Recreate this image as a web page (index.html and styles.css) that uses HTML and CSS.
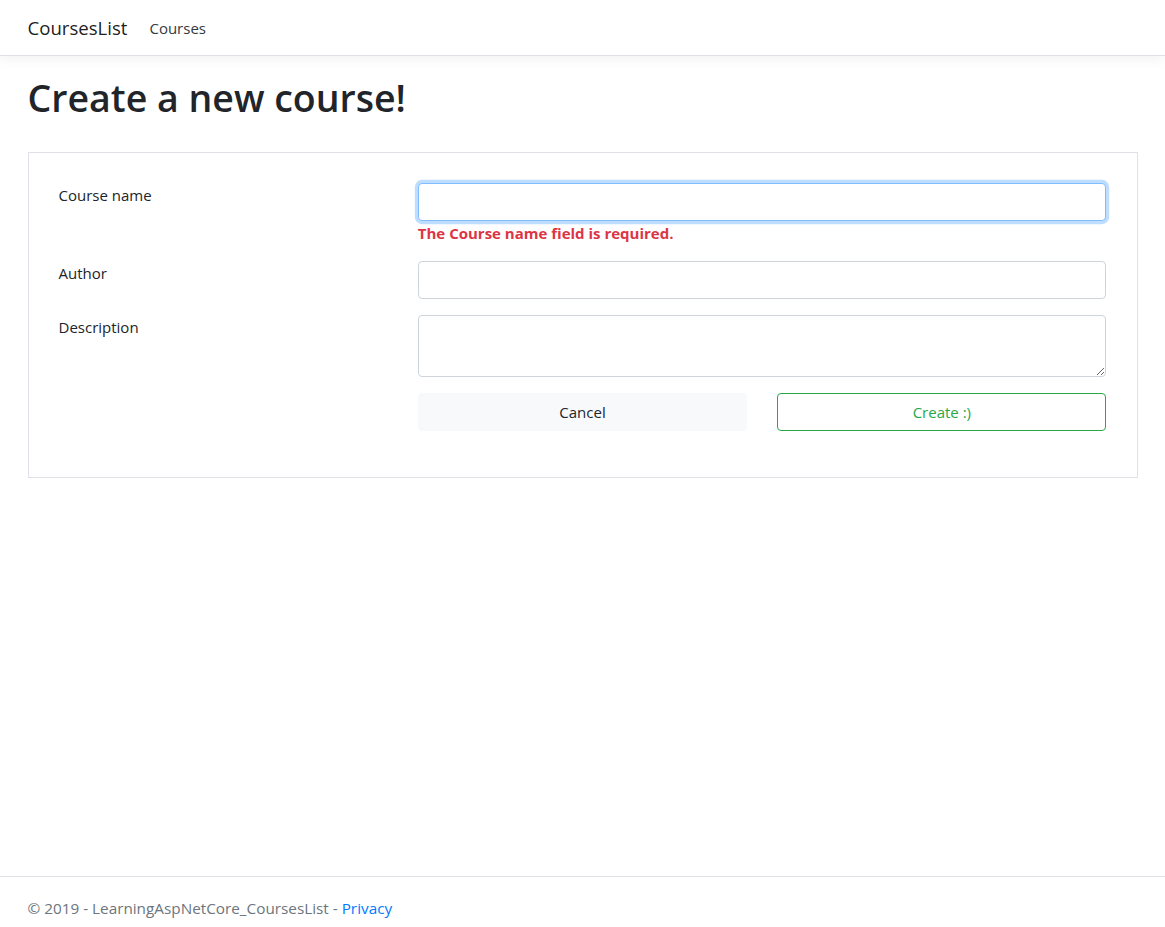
FILE: index.html
```html
<!DOCTYPE html>
<html lang="en">
<head>
<meta charset="utf-8">
<title>Create - CoursesList</title>
<link rel="stylesheet" href="styles.css">
</head>
<body>
<header class="navbar">
  <div class="container nav-inner">
    <a class="brand" href="#">CoursesList</a>
    <a class="nav-link" href="#">Courses</a>
  </div>
</header>
<main class="container main">
  <h1 class="title">Create a new course!</h1>
  <form class="card">
    <div class="row group">
      <label class="col-label">Course name</label>
      <div class="col-field">
        <input class="control focus" type="text">
        <span class="error">The Course name field is required.</span>
      </div>
    </div>
    <div class="row group">
      <label class="col-label">Author</label>
      <div class="col-field">
        <input class="control" type="text">
      </div>
    </div>
    <div class="row group">
      <label class="col-label">Description</label>
      <div class="col-field">
        <textarea class="control area" rows="2"></textarea>
      </div>
    </div>
    <div class="row group">
      <div class="col-label"></div>
      <div class="col-field">
        <div class="row">
          <div class="col-half"><button type="button" class="btn btn-light">Cancel</button></div>
          <div class="col-half"><button type="button" class="btn btn-outline-success">Create :)</button></div>
        </div>
      </div>
    </div>
  </form>
</main>
<footer class="footer">
  <div class="container">&copy; 2019 - LearningAspNetCore_CoursesList - <a href="#">Privacy</a></div>
</footer>
</body>
</html>
```
FILE: styles.css
```css
* { box-sizing: border-box; }
html, body { margin: 0; padding: 0; }
body {
  font-family: "Open Sans", "Noto Sans", "Liberation Sans", sans-serif;
  font-size: 15px;
  line-height: 24px;
  color: #212529;
  background: #fff;
  min-height: 100vh;
  display: flex;
  flex-direction: column;
}
a { text-decoration: none; }
.container {
  width: 1140px;
  margin: 0 auto;
  padding: 0 15px;
}
.navbar {
  height: 56px;
  border-bottom: 1px solid #dee2e6;
  box-shadow: 0 4px 12px rgba(0,0,0,0.05);
  margin-bottom: 16px;
}
.nav-inner {
  display: flex;
  align-items: center;
  height: 55px;
}
.brand {
  font-size: 18.6px;
  color: rgba(0,0,0,0.9);
  margin-right: 14px;
  line-height: 30px;
}
.nav-link {
  color: #343a40;
  padding: 8px;
  font-size: 15px;
}
.main { flex: 1; }
.title {
  font-size: 37.5px;
  font-weight: 600;
  line-height: 48px;
  margin: 0 0 30px 0;
  padding-top: 2px;
}
.card {
  border: 1px solid #dee2e6;
  padding: 30px;
  margin: 0;
}
.row {
  display: flex;
  margin: 0 -15px;
}
.group { margin-bottom: 16px; }
.col-label {
  width: 33.3333%;
  padding: 0 15px;
  font-size: 15px;
}
.col-field {
  width: 66.6667%;
  padding: 0 15px;
}
.col-half {
  width: 50%;
  padding: 0 15px;
}
.control {
  display: block;
  width: 100%;
  height: 38px;
  padding: 6px 12px;
  font: inherit;
  color: #495057;
  background: #fff;
  border: 1px solid #ced4da;
  border-radius: 4px;
  outline: none;
}
.control.focus {
  border-color: #80bdff;
  box-shadow: 0 0 0 3.2px rgba(0,123,255,0.25);
}
.area {
  height: 62px;
  resize: vertical;
}
.error {
  display: block;
  color: #dc3545;
  font-weight: 700;
  font-size: 15px;
}
.btn {
  display: block;
  width: 100%;
  height: 38px;
  font: inherit;
  font-size: 15px;
  border-radius: 4px;
  border: 1px solid transparent;
  padding: 6px 12px;
  text-align: center;
}
.btn-light {
  background: #f8f9fa;
  border-color: #f8f9fa;
  color: #212529;
}
.btn-outline-success {
  background: #fff;
  border-color: #28a745;
  color: #28a745;
}
.footer {
  border-top: 1px solid #dee2e6;
  color: #6c757d;
  font-size: 15.3px;
  line-height: 24px;
  padding: 19px 0 7px;
  height: 51px;
}
.footer a { color: #007bff; }
```
